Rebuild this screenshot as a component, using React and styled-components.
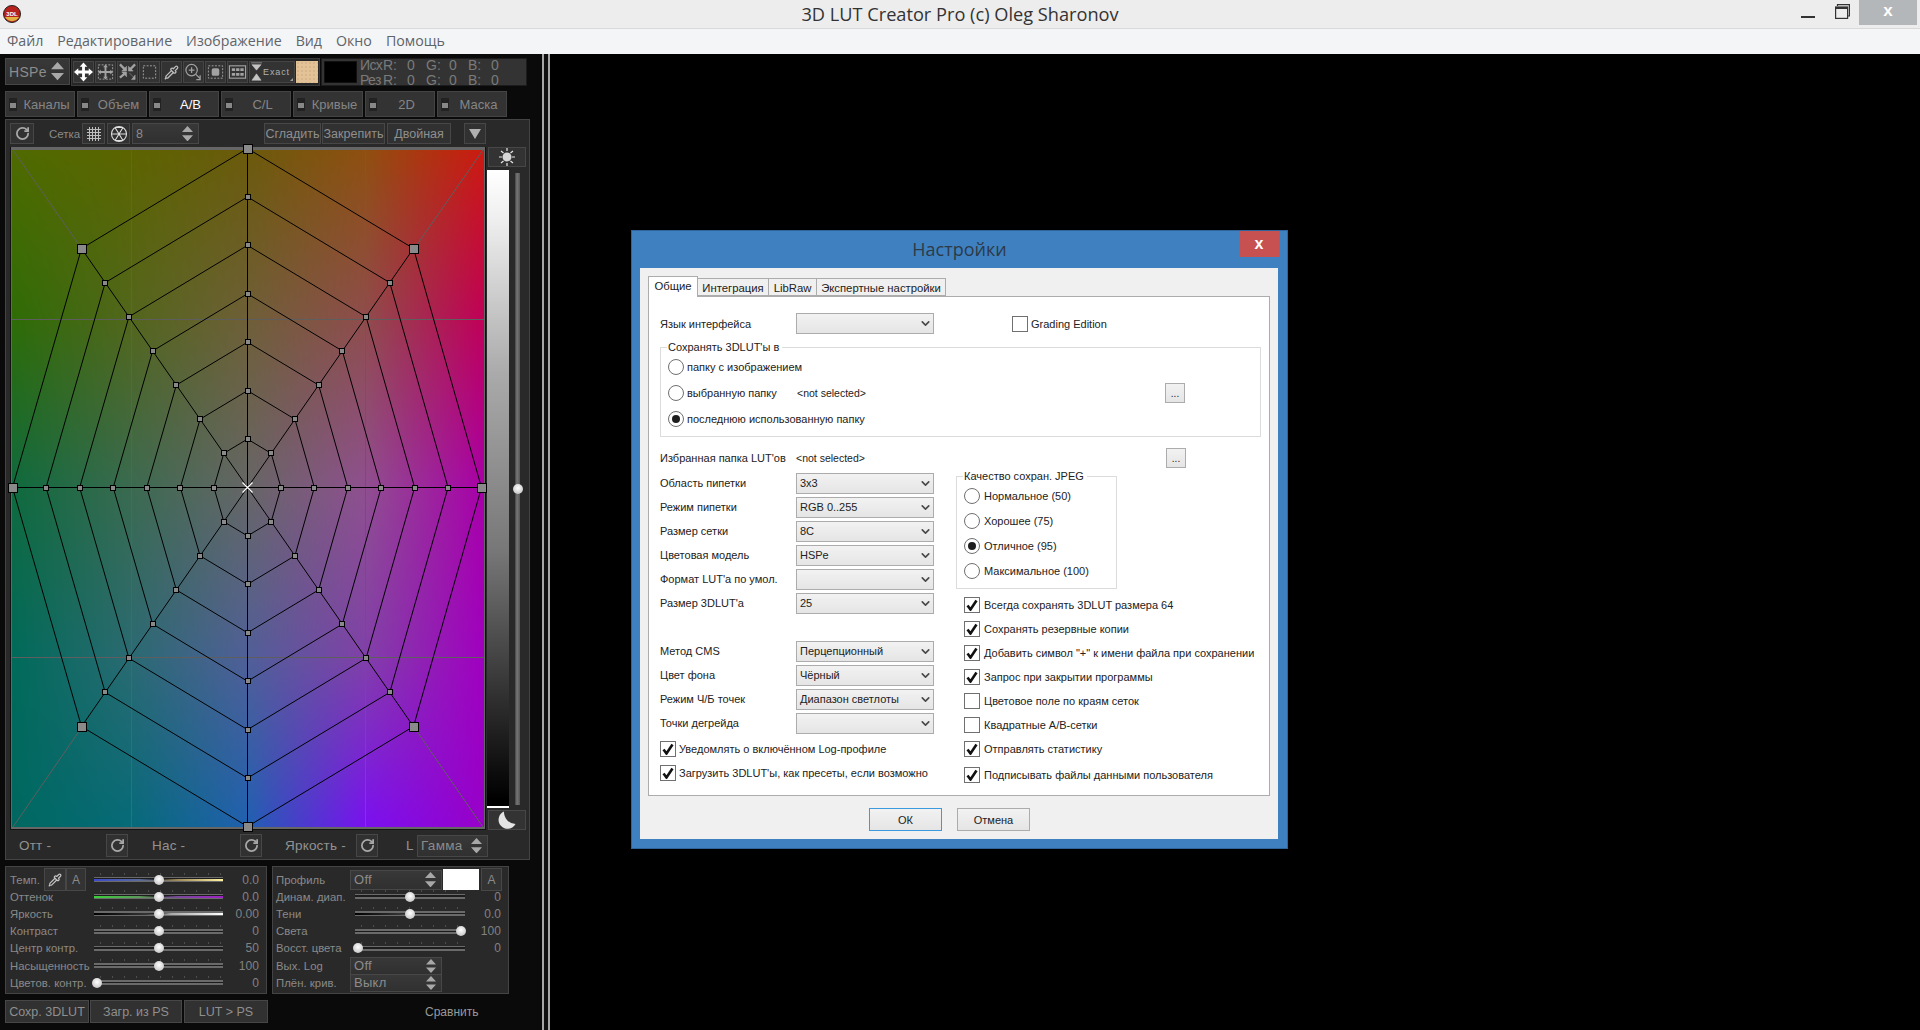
import React, { useEffect, useRef } from "react";
import styled, { createGlobalStyle } from "styled-components";
import { RotateCw, Pipette, ChevronDown } from "lucide-react";

const GlobalStyle = createGlobalStyle`
  html, body { margin: 0; padding: 0; background: #000; }
  * { box-sizing: border-box; }
  body { font-family: "Liberation Sans", Arial, sans-serif; }
`;

const MESH = [
  ["#4f6a00", "#5c6400", "#6b5a0c", "#8f4f10", "#cc1a10"],
  ["#2e6c06", "#52661c", "#6e5f38", "#8f4c4c", "#c00058"],
  ["#0f6a3e", "#3a6a50", "#666666", "#8f4f90", "#a800a8"],
  ["#006a5a", "#2a6a72", "#505f98", "#8040a8", "#a000c0"],
  ["#006860", "#066a78", "#2060b0", "#7a10f0", "#9800c8"],
];

const hex = s => [1, 3, 5].map(i => parseInt(s.slice(i, i + 2), 16));

const ColorPlane = () => {
  const ref = useRef(null);
  useEffect(() => {
    const c = ref.current;
    const ctx = c.getContext("2d");
    const img = ctx.createImageData(c.width, c.height);
    const cells = MESH.map(r => r.map(hex));
    let o = 0;
    for (let y = 0; y < c.height; y++) {
      const v = (y / (c.height - 1)) * 4;
      const j = Math.min(3, Math.floor(v));
      const fy = v - j;
      for (let x = 0; x < c.width; x++) {
        const u = (x / (c.width - 1)) * 4;
        const i = Math.min(3, Math.floor(u));
        const fx = u - i;
        for (let k = 0; k < 3; k++) {
          const top = cells[j][i][k] * (1 - fx) + cells[j][i + 1][k] * fx;
          const bot = cells[j + 1][i][k] * (1 - fx) + cells[j + 1][i + 1][k] * fx;
          img.data[o++] = top * (1 - fy) + bot * fy;
        }
        img.data[o++] = 255;
      }
    }
    ctx.putImageData(img, 0, 0);
  }, []);
  return <Plane ref={ref} width={472} height={677} />;
};

const CX = 248.5;
const CY = 488.5;
const OUTER = [
  [248.5, 149.5], [414.5, 249.5], [482.5, 488.5], [414.5, 727.5],
  [248.5, 827.5], [82.5, 727.5], [13.5, 488.5], [82.5, 249.5],
];

const Web = () => {
  const pt = (o, k) => [CX + ((o[0] - CX) * k) / 7, CY + ((o[1] - CY) * k) / 7];
  const rings = [1, 2, 3, 4, 5, 6, 7].map(k => OUTER.map(o => pt(o, k).join(",")).join(" "));
  return (
    <WebSvg viewBox="10 147 476 683" width="476" height="683">
      <g stroke="#5e5e5e" strokeWidth="1" fill="none">
        <path d="M132.5 151V828M366.5 151V828M13 320.500H485M13 658.500H485" />
        <path d="M14 151L83 250M484 151L415 250M14 828L83 728M484 828L415 728" />
      </g>
      <g stroke="#000" strokeWidth="1" fill="none">
        {rings.map((r, i) => <polygon key={i} points={r} />)}
        {OUTER.map((o, i) => <line key={i} x1={CX} y1={CY} x2={o[0]} y2={o[1]} />)}
      </g>
      {OUTER.map((o, i) =>
        [1, 2, 3, 4, 5, 6, 7].map(k => {
          const [x, y] = pt(o, k);
          const s = k === 7 ? 9 : 5;
          return (
            <rect key={i + "-" + k} x={Math.round(x) - s / 2} y={Math.round(y) - s / 2} width={s} height={s}
              fill="#8a8a8a" stroke="#000" strokeWidth="1" />
          );
        })
      )}
      <path d="M243.500 483.500L253.500 493.500M253.500 483.500L243.500 493.500" stroke="#fff" strokeWidth="1.200" />
    </WebSvg>
  );
};

const UpDown = ({ size = 13 }) => (
  <svg width={size} height={size * 1.4} viewBox="0 0 10 14">
    <path d="M5 0L10 5.500H0Z M5 14L0 8.500H10Z" fill="#a8a8a8" />
  </svg>
);

const iconGray = "#a2a2a2";
const ToolSvg = ({ children }) => <svg width="20" height="20" viewBox="0 0 20 20" fill="none">{children}</svg>;

const MoveIcon = () => (
  <ToolSvg>
    <path d="M10 0L14 4.500H11.500V8.500H15.500V6L20 10L15.500 14V11.500H11.500V15.500H14L10 20L6 15.500H8.500V11.500H4.500V14L0 10L4.500 6V8.500H8.500V4.500H6Z" fill="#fff" />
  </ToolSvg>
);
const ExpandIcon = () => (
  <ToolSvg>
    <rect x="2.500" y="2.500" width="15" height="15" stroke={iconGray} strokeDasharray="2 1.500" />
    <path d="M10 2L12.500 5H11V9H15V7.500L18 10L15 12.500V11H11V15H12.500L10 18L7.500 15H9V11H5V12.500L2 10L5 7.500V9H9V5H7.500Z" fill={iconGray} />
  </ToolSvg>
);
const CompressIcon = () => (
  <ToolSvg>
    <path d="M2 2L8 8M18 2L12 8M2 16L8 11" stroke={iconGray} strokeWidth="2.400" />
    <path d="M9 9V4L4 9ZM11 9V4L16 9ZM9 10V15L4 10ZM12 11L18 17M18 13V18H14" fill={iconGray} stroke={iconGray} strokeWidth=".6" />
  </ToolSvg>
);
const MarqueeIcon = () => (
  <ToolSvg><rect x="3.500" y="3.500" width="13" height="13" stroke={iconGray} strokeDasharray="2 1.500" /></ToolSvg>
);
const ZoomIcon = () => (
  <ToolSvg>
    <circle cx="8" cy="8" r="6" stroke={iconGray} strokeWidth="1.300" />
    <path d="M8 5V11M5 8H11M12.500 12.500L17 17M17 13.500V18H13" stroke={iconGray} strokeWidth="1.300" />
  </ToolSvg>
);
const FitIcon = () => (
  <ToolSvg>
    <rect x="2.500" y="3.500" width="15" height="13" stroke={iconGray} strokeDasharray="2 1.500" />
    <rect x="6" y="6" width="8" height="8" rx="2" fill={iconGray} />
  </ToolSvg>
);
const TilesIcon = () => (
  <ToolSvg>
    <rect x="1.500" y="3.500" width="17" height="13" stroke={iconGray} strokeWidth="1.200" />
    <path d="M4 6H7.500V9H4ZM8.500 6H12V9H8.500ZM13 6H16.500V9H13ZM4 11H7.500V14H4ZM8.500 11H12V14H8.500ZM13 11H16.500V14H13Z" fill={iconGray} />
  </ToolSvg>
);
const Hourglass = () => (
  <svg width="11" height="20" viewBox="0 0 12 20">
    <path d="M0 0H12M6 8L1 2H11ZM6 12L11 19H1Z" fill="#c4c4c4" stroke="#c4c4c4" strokeWidth=".6" />
  </svg>
);
const GridIcon = () => (
  <svg width="16" height="16" viewBox="0 0 16 16">
    <path d="M3.500 1V15M6.500 1V15M9.500 1V15M12.500 1V15M1 3.500H15M1 6.500H15M1 9.500H15M1 12.500H15" stroke="#bdbdbd" />
  </svg>
);
const PolarIcon = () => (
  <svg width="18" height="18" viewBox="0 0 18 18" fill="none" stroke="#e0e0e0" strokeWidth="1.100">
    <circle cx="9" cy="9" r="7.500" />
    <path d="M5 2.500L13 15.500M13 2.500L5 15.500M1.500 9H16.500M5 2.500H13M5 15.500H13" />
  </svg>
);
const SunIcon = () => (
  <svg width="20" height="18" viewBox="0 0 20 18">
    <circle cx="10" cy="9" r="4.500" fill="#d8d8d8" />
    <path d="M10 0V3M10 15V18M2 9H5M15 9H18M4 3L6.500 5M16 3L13.500 5M4 15L6.500 13M16 15L13.500 13" stroke="#e8e8e8" strokeWidth="1.200" />
  </svg>
);
const MoonIcon = () => (
  <svg width="18" height="18" viewBox="0 0 18 18">
    <path d="M6 0.500A9 9 0 1 0 17.500 13A12 12 0 0 1 6 0.500Z" fill="#e4e4e4" />
  </svg>
);
const Refresh = () => <RotateCw size={15} strokeWidth={2.800} color="#a8a8a8" />;

const Root = styled.div`
  position: relative;
  width: 1920px;
  height: 1030px;
  overflow: hidden;
  background: #000;
  display: flex;
  flex-direction: column;
`;

const TitleBar = styled.div`
  height: 29px;
  background: #ededed;
  border-bottom: 1px solid #d9d9d9;
  display: grid;
  grid-template-columns: 1fr auto 1fr;
  align-items: start;
`;

const AppIcon = styled.svg`
  margin: 5px 0 0 3px;
`;

const Title = styled.div`
  font-family: "Open Sans", sans-serif;
  font-size: 18.200px;
  line-height: 29px;
  color: #333;
`;

const WinControls = styled.div`
  justify-self: end;
  display: flex;
  align-items: flex-start;
  margin-right: 3px;
`;

const MinButton = styled.div`
  width: 14px;
  height: 2px;
  background: #333;
  margin: 16px 20px 0 0;
`;

const RestoreIcon = styled.svg`
  margin: 4px 9px 0 0;
`;

const CloseButton = styled.div`
  width: 58px;
  height: 25px;
  background: #b4b7b9;
  color: #fff;
  font-weight: bold;
  font-size: 17px;
  text-align: center;
  line-height: 22px;
`;

const MenuBar = styled.div`
  height: 25px;
  background: #f4f5f7;
  display: flex;
  align-items: center;
  gap: 14px;
  padding: 0 0 2px 7px;
  font-family: "Open Sans", sans-serif;
  font-size: 14.200px;
  color: #5f6469;
`;

const Workspace = styled.div`
  flex: 1;
  display: flex;
  min-height: 0;
`;

const LeftPane = styled.div`
  width: 542px;
  background: #0a0a0a;
  padding: 4px 0 0 5px;
  display: flex;
  flex-direction: column;
  font-family: "Liberation Sans", sans-serif;
  color: #8a8a8a;
`;

const Separator = styled.div`
  width: 8px;
  background: #111;
  border-left: 2px solid #a8a8a8;
  border-right: 2px solid #a8a8a8;
`;

const ToolRow = styled.div`
  display: flex;
  height: 28px;
  gap: 1px;
`;

const Combo = styled.div`
  width: ${p => p.$w}px;
  height: ${p => p.$h || 27}px;
  margin-left: ${p => p.$ml || 0}px;
  flex: none;
  background: linear-gradient(#383838, #303030);
  border: 1px solid #474747;
  display: flex;
  align-items: center;
  justify-content: space-between;
  padding: 0 5px 0 3px;
  font-size: ${p => p.$fs || 14}px;
  color: #8c8c8c;
  letter-spacing: .3px;
`;

const ToolGroup = styled.div`
  display: flex;
  width: 249px;
  gap: 1px;
  padding: 2px 1px;
  background: #262626;
  border: 1px solid #3a3a3a;
`;

const ToolButton = styled.div`
  position: relative;
  width: 21px;
  flex: none;
  background: #333;
  border: 1px solid #454545;
  display: flex;
  align-items: center;
  justify-content: center;
`;

const ExactButton = styled(ToolButton)`
  width: 46px;
  justify-content: flex-start;
  gap: 1px;
  padding-left: 1px;
  font-size: 9px;
  letter-spacing: .9px;
  color: #b0b0b0;
  overflow: hidden;
`;

const CornerMark = styled.span`
  position: absolute;
  right: 1px;
  bottom: 1px;
  width: 0;
  height: 0;
  border-left: 3px solid transparent;
  border-bottom: 3px solid #a0a0a0;
`;

const Swatch = styled.div`
  flex: 1;
  background: #e4c297;
  background-image: radial-gradient(#d8b68c 35%, transparent 40%);
  background-size: 4px 4px;
`;

const Readout = styled.div`
  width: 206px;
  background: #333;
  border: 1px solid #1c1c1c;
  display: flex;
  overflow: hidden;
`;

const BlackBox = styled.div`
  width: 33px;
  margin: 2px 3px 2px 2px;
  background: #000;
  border: 1px solid #111;
  flex: none;
`;

const ReadoutLines = styled.div`
  flex: 1;
  display: flex;
  flex-direction: column;
  justify-content: center;
  gap: 1px;
  font-size: 14px;
  line-height: 14px;
  color: #7a7a7a;
`;

const ReadoutLine = styled.div`
  display: grid;
  grid-template-columns: 23px 24px 19px 23px 19px 23px 20px;
  height: 14px;
`;

const ReadoutHead = styled.span`
  letter-spacing: -.6px;
  white-space: nowrap;
  overflow: hidden;
`;

const ModeRow = styled.div`
  display: flex;
  gap: 2px;
  margin-top: 5px;
`;

const ModeTab = styled.div`
  width: 70px;
  height: 26px;
  background: #333;
  border: 1px solid #444;
  display: flex;
  align-items: center;
  padding-left: 3px;
  font-size: 13px;
  color: ${p => (p.$active ? "#fff" : "#858585")};
`;

const ModeLed = styled.span`
  width: 8px;
  height: 13px;
  flex: none;
  background: linear-gradient(#222 35%, #888 35%, #888 85%, #222 85%);
  border: 1px solid #222;
`;

const ModeText = styled.span`
  flex: 1;
  text-align: center;
  padding-left: 2px;
`;

const MainPanel = styled.div`
  width: 525px;
  height: 741px;
  margin-top: 2px;
  background: #292929;
  border: 1px solid #444;
  padding: 3px 0 0 4px;
  display: flex;
  flex-direction: column;
`;

const GridBar = styled.div`
  height: 21px;
  display: flex;
  align-items: stretch;
  font-size: 12.500px;
`;

const DarkButton = styled.div`
  width: ${p => p.$w}px;
  margin-left: ${p => p.$ml || 0}px;
  height: ${p => p.$h || "auto"};
  flex: none;
  background: #313131;
  border: 1px solid #474747;
  display: flex;
  align-items: center;
  justify-content: center;
  color: #8f8f8f;
  white-space: nowrap;
`;

const SmallLabel = styled.span`
  margin-left: ${p => p.$ml}px;
  width: ${p => p.$w}px;
  flex: none;
  display: flex;
  align-items: center;
  font-size: 11.500px;
`;

const FieldRow = styled.div`
  display: flex;
  margin-top: 3px;
  height: 683px;
`;

const Field = styled.div`
  position: relative;
  width: 476px;
  height: 683px;
  flex: none;
  background: #666;
  border: 1px solid #111;
  border-width: 0 1px 1px;
  padding: 3px 1px 2px;
`;

const Plane = styled.canvas`
  display: block;
  width: 472px;
  height: 677px;
`;

const WebSvg = styled.svg`
  position: absolute;
  left: -2px;
  top: -1px;
  overflow: visible;
`;

const SideColumn = styled.div`
  width: 40px;
  margin-left: 2px;
  display: flex;
  flex-direction: column;
`;

const SideButton = styled.div`
  height: 20px;
  width: 38px;
  flex: none;
  background: #333;
  border: 1px solid #474747;
  display: flex;
  align-items: center;
  justify-content: center;
`;

const LevelRow = styled.div`
  flex: 1;
  display: flex;
  margin: 3px 0 2px -1px;
`;

const LevelBar = styled.div`
  width: 22px;
  background: linear-gradient(#fff, #eee 8%, #aaa 32%, #777 60%, #333 82%, #000 99%);
  border-bottom: 2px solid #fff;
`;

const LevelTrack = styled.div`
  position: relative;
  width: 5px;
  margin: 3px 0 3px 6px;
  background: linear-gradient(90deg, #444, #777 40%, #555);
`;

const RoundThumb = styled.div`
  position: absolute;
  left: ${p => p.$pos}%;
  top: ${p => p.$top || "50%"};
  width: 10px;
  height: 10px;
  margin: -5px 0 0 -5px;
  border-radius: 50%;
  background: radial-gradient(circle at 50% 40%, #fff, #ccc 70%, #aaa);
`;

const AxisRow = styled.div`
  height: 23px;
  margin-top: 4px;
  display: flex;
  align-items: center;
  font-size: 13.500px;
  color: #929292;
  letter-spacing: .2px;
`;

const AxisLabel = styled.span`
  width: ${p => p.$w}px;
  padding-left: ${p => p.$pl}px;
  flex: none;
`;

const PanelRow = styled.div`
  display: flex;
  gap: 5px;
  margin-top: 6px;
`;

const SubPanel = styled.div`
  width: ${p => p.$w}px;
  height: 128px;
  background: #292929;
  border: 1px solid #444;
  padding: ${p => p.$pad};
  font-size: 11.300px;
  letter-spacing: .05px;
`;

const SliderRow = styled.div`
  height: 17.200px;
  display: grid;
  grid-template-columns: ${p => p.$cols};
  grid-template-rows: 17.200px;
  align-items: center;
  white-space: nowrap;
`;

const RowLabel = styled.div`
  display: flex;
  align-items: center;
`;

const TempLabel = styled.span`
  width: 34px;
  flex: none;
`;

const MiniButton = styled.div`
  width: ${p => p.$w}px;
  height: 23px;
  flex: none;
  background: #333;
  border: 1px solid #474747;
  display: flex;
  align-items: center;
  justify-content: center;
  font-size: 12px;
`;

const Value = styled.div`
  text-align: right;
  font-size: 12px;
  color: #828282;
`;

const Slider = styled.div`
  position: relative;
  height: 5px;
  background: linear-gradient(#6a6a6a 0 1.500px, #1c1c1c 1.500px 3px, #6a6a6a 3px);
  &::before {
    content: "";
    position: absolute;
    left: 6px;
    right: 0;
    top: -4px;
    height: 2px;
    background: repeating-linear-gradient(90deg, #4e4e4e 0 1px, transparent 1px 12px);
  }
  &::after {
    content: "";
    position: absolute;
    left: 0;
    right: 0;
    top: 1.500px;
    height: 2px;
    background: ${p => (p.$colors ? `linear-gradient(90deg, ${p.$colors})` : "none")};
  }
`;

const SliderThumb = styled(RoundThumb)`
  z-index: 1;
`;

const WhiteBox = styled.div`
  width: 36px;
  height: 21px;
  flex: none;
  margin: 0 2px 0 1px;
  background: #fff;
`;

const FooterRow = styled.div`
  display: flex;
  gap: 1px;
  height: 23px;
  margin-top: 6px;
  font-size: 12.500px;
  align-items: stretch;
`;

const CompareText = styled.div`
  margin-left: 156px;
  display: flex;
  align-items: center;
  font-size: 12px;
  color: #999;
`;

const Dialog = styled.div`
  position: absolute;
  left: 631px;
  top: 230px;
  width: 657px;
  height: 619px;
  background: #3f81c0;
  border: 1px solid #2f659b;
  display: flex;
  flex-direction: column;
  font-family: "Liberation Sans", sans-serif;
  font-size: 11px;
  color: #222;
`;

const DialogHead = styled.div`
  height: 37px;
  display: grid;
  grid-template-columns: 1fr auto 1fr;
`;

const DialogTitle = styled.div`
  font-family: "Open Sans", sans-serif;
  font-size: 18px;
  line-height: 36px;
  color: #2c3a48;
`;

const DialogClose = styled.div`
  justify-self: end;
  width: 40px;
  height: 26px;
  margin-right: 8px;
  background: #c75050;
  color: #fff;
  font-weight: bold;
  font-size: 16px;
  line-height: 25px;
  text-align: center;
`;

const DialogBody = styled.div`
  flex: 1;
  margin: 0 9px 9px 8px;
  background: #f0f0f0;
  padding: 8px 0 0 8px;
`;

const Tabs = styled.div`
  display: flex;
  align-items: flex-end;
  height: 20px;
  font-size: 11.300px;
`;

const TabItem = styled.div`
  width: ${p => p.$w}px;
  height: ${p => (p.$active ? 21 : 18)}px;
  margin-bottom: ${p => (p.$active ? -1 : 0)}px;
  padding: ${p => (p.$active ? "0 0 3px" : "1px 0 0")};
  background: ${p => (p.$active ? "#fff" : "#f0f0f0")};
  border: 1px solid #acacac;
  border-bottom: ${p => (p.$active ? "none" : "1px solid #acacac")};
  border-left-width: ${p => (p.$first ? 1 : 0)}px;
  display: flex;
  align-items: center;
  justify-content: center;
  position: relative;
  z-index: ${p => (p.$active ? 1 : 0)};
`;

const Pane = styled.div`
  width: 622px;
  height: 500px;
  background: #fff;
  border: 1px solid #acacac;
  padding: 16px 0 0 11px;
`;

const Row = styled.div`
  height: ${p => p.$h || 24}px;
  display: flex;
  align-items: center;
  margin-top: ${p => p.$mt || 0}px;
`;

const FieldLabel = styled.div`
  width: 136px;
  flex: none;
  white-space: nowrap;
`;

const Note = styled.span`
  font-size: 10.500px;
`;

const Select = styled.div`
  width: 138px;
  height: 21px;
  flex: none;
  background: linear-gradient(#f2f2f2, #e5e5e5);
  border: 1px solid #acacac;
  display: flex;
  align-items: center;
  justify-content: space-between;
  padding: 0 1px 0 3px;
`;

const CheckLine = styled.label`
  display: flex;
  align-items: center;
  gap: ${p => p.$gap || 3}px;
  margin-left: ${p => p.$ml || 0}px;
  white-space: nowrap;
`;

const CheckBox = styled.span`
  width: 16px;
  height: 16px;
  flex: none;
  background: #fff;
  border: 1px solid #707070;
  display: flex;
  align-items: center;
  justify-content: center;
`;

const RadioDot = styled.span`
  width: 16px;
  height: 16px;
  flex: none;
  border-radius: 50%;
  background: #fff;
  border: 1px solid #6f6f6f;
  display: flex;
  align-items: center;
  justify-content: center;
  &::after {
    content: "";
    width: 8px;
    height: 8px;
    border-radius: 50%;
    background: ${p => (p.$on ? "#1e1e1e" : "transparent")};
  }
`;

const Group = styled.fieldset`
  width: ${p => p.$w}px;
  margin: ${p => p.$m || 0};
  border: 1px solid #dcdcdc;
  padding: ${p => p.$pad};
  min-inline-size: 0;
`;

const Legend = styled.legend`
  padding: 0 3px 0 1px;
  margin-left: ${p => p.$ml || 0}px;
  line-height: 13px;
`;

const RadioRow = styled.div`
  height: ${p => p.$h}px;
  display: flex;
  align-items: center;
`;

const RadioLabel = styled.div`
  width: ${p => p.$w || "auto"};
  flex: none;
`;

const Dots = styled.div`
  width: 20px;
  height: 20px;
  margin-left: auto;
  margin-right: ${p => p.$mr}px;
  flex: none;
  background: linear-gradient(#f2f2f2, #e5e5e5);
  border: 1px solid #acacac;
  text-align: center;
  line-height: 20px;
  font-size: 10px;
`;

const Columns = styled.div`
  display: flex;
`;

const ColLeft = styled.div`
  width: 274px;
  padding-top: 3px;
  flex: none;
`;

const ColRight = styled.div`
  margin-left: 22px;
  flex: none;
`;

const CheckColumn = styled.div`
  margin: 4px 0 0 8px;
`;

const DialogFooter = styled.div`
  display: flex;
  gap: 15px;
  padding: 12px 0 0 221px;
`;

const PlainButton = styled.div`
  width: 73px;
  height: 23px;
  background: linear-gradient(#f2f2f2, #e5e5e5);
  border: 1px solid ${p => (p.$primary ? "#3c9ade" : "#acacac")};
  display: flex;
  align-items: center;
  justify-content: center;
`;

const Tick = () => (
  <svg width="12" height="12" viewBox="0 0 12 12">
    <path d="M1.500 6.500L4.500 10.500L10.500 1.500" fill="none" stroke="#111" strokeWidth="2.600" />
  </svg>
);

const Drop = ({ label }) => (
  <Select>
    <span>{label}</span>
    <ChevronDown size={13} strokeWidth={3} color="#4a4a4a" />
  </Select>
);

const FormRow = ({ label, value }) => (
  <Row>
    <FieldLabel>{label}</FieldLabel>
    <Drop label={value} />
  </Row>
);

const Check = ({ label, on, gap }) => (
  <CheckLine $gap={gap}>
    <CheckBox>{on && <Tick />}</CheckBox>
    {label}
  </CheckLine>
);

const LEFT_SLIDERS = [
  ["Оттенок", 50, "0.0", "#39d039 0%, #5a9a5a 35%, transparent 50%, #7a4a9a 65%, #a020c8 100%"],
  ["Яркость", 50, "0.00", "#000 0%, #333 40%, transparent 50%, #aaa 60%, #fff 100%"],
  ["Контраст", 50, "0"],
  ["Центр контр.", 50, "50"],
  ["Насыщенность", 50, "100"],
  ["Цветов. контр.", 2, "0"],
];

const RIGHT_SLIDERS = [
  ["Динам. диап.", 50, "0"],
  ["Тени", 50, "0.0", "#000 0%, #333 40%, transparent 55%"],
  ["Света", 96, "100"],
  ["Восст. цвета", 3, "0"],
];

const JPEG = [
  ["Нормальное (50)"],
  ["Хорошее (75)"],
  ["Отличное (95)", true],
  ["Максимальное (100)"],
];

const EXTRA = [
  ["Всегда сохранять 3DLUT размера 64", true],
  ["Сохранять резервные копии", true],
  ['Добавить символ "+" к имени файла при сохранении', true],
  ["Запрос при закрытии программы", true],
  ["Цветовое поле по краям сеток", false],
  ["Квадратные A/B-сетки", false],
  ["Отправлять статистику", true],
];

const Track = ({ pos, colors }) => (
  <Slider $colors={colors}>
    <SliderThumb $pos={pos} $top="2.500px" />
  </Slider>
);

const LEFT_COLS = "84px 129px 36px";
const RIGHT_COLS = "79px 110px 36px";
const COMBO_COLS = "74px auto";

const MODES = ["Каналы", "Объем", "A/B", "C/L", "Кривые", "2D", "Маска"];

const App = () => (
  <Root>
    <GlobalStyle />
    <TitleBar>
      <AppIcon width="18" height="18" viewBox="0 0 18 18">
        <circle cx="9" cy="9" r="8.500" fill="#b8221c" stroke="#222" />
        <path d="M2 12A8 8 0 0 0 16 12Z" fill="#e0b040" />
        <text x="9" y="11" fontSize="6" fontWeight="bold" textAnchor="middle" fill="#fff" fontFamily="Liberation Sans">3DL</text>
      </AppIcon>
      <Title>3D LUT Creator Pro (c) Oleg Sharonov</Title>
      <WinControls>
        <MinButton />
        <RestoreIcon width="15" height="15" viewBox="0 0 15 15" fill="none" stroke="#333" strokeWidth="1.200">
          <path d="M2.500 2V.6H14.400V12H13" />
          <rect x=".6" y="3" width="12" height="11.400" />
          <path d="M.6 4H12.600" strokeWidth="2" />
        </RestoreIcon>
        <CloseButton>x</CloseButton>
      </WinControls>
    </TitleBar>
    <MenuBar>
      <span>Файл</span>
      <span>Редактирование</span>
      <span>Изображение</span>
      <span>Вид</span>
      <span>Окно</span>
      <span>Помощь</span>
    </MenuBar>
    <Workspace>
      <LeftPane>
        <ToolRow>
          <Combo $w={65}>HSPe <UpDown /></Combo>
          <ToolGroup>
            <ToolButton><MoveIcon /></ToolButton>
            <ToolButton><ExpandIcon /></ToolButton>
            <ToolButton><CompressIcon /></ToolButton>
            <ToolButton><MarqueeIcon /></ToolButton>
            <ToolButton><Pipette size={15} color="#c0c0c0" /></ToolButton>
            <ToolButton><ZoomIcon /></ToolButton>
            <ToolButton><FitIcon /></ToolButton>
            <ToolButton><TilesIcon /></ToolButton>
            <ExactButton><Hourglass />Exact<CornerMark /></ExactButton>
            <Swatch />
          </ToolGroup>
          <Readout>
            <BlackBox />
            <ReadoutLines>
              <ReadoutLine>
                <ReadoutHead>Исх</ReadoutHead><span>R:</span><span>0</span><span>G:</span><span>0</span><span>B:</span><span>0</span>
              </ReadoutLine>
              <ReadoutLine>
                <ReadoutHead>Рез</ReadoutHead><span>R:</span><span>0</span><span>G:</span><span>0</span><span>B:</span><span>0</span>
              </ReadoutLine>
            </ReadoutLines>
          </Readout>
        </ToolRow>
        <ModeRow>
          {MODES.map(m => (
            <ModeTab key={m} $active={m === "A/B"}>
              <ModeLed />
              <ModeText>{m}</ModeText>
            </ModeTab>
          ))}
        </ModeRow>
        <MainPanel>
          <GridBar>
            <DarkButton $w={24}><Refresh /></DarkButton>
            <SmallLabel $ml={15} $w={33}>Сетка</SmallLabel>
            <DarkButton $w={23}><GridIcon /></DarkButton>
            <DarkButton $w={23} $ml={2}><PolarIcon /></DarkButton>
            <Combo $w={67} $h={21} $fs={12.500} $ml={2}>8 <UpDown size={11} /></Combo>
            <DarkButton $w={57} $ml={65}>Сгладить</DarkButton>
            <DarkButton $w={63} $ml={1}>Закрепить</DarkButton>
            <DarkButton $w={64} $ml={2}>Двойная</DarkButton>
            <DarkButton $w={22} $ml={13}>
              <svg width="12" height="10" viewBox="0 0 12 10"><path d="M0 0H12L6 10Z" fill="#b0b0b0" /></svg>
            </DarkButton>
          </GridBar>
          <FieldRow>
            <Field>
              <ColorPlane />
              <Web />
            </Field>
            <SideColumn>
              <SideButton><SunIcon /></SideButton>
              <LevelRow>
                <LevelBar />
                <LevelTrack><RoundThumb $pos={50} /></LevelTrack>
              </LevelRow>
              <SideButton><MoonIcon /></SideButton>
            </SideColumn>
          </FieldRow>
          <AxisRow>
            <AxisLabel $w={96} $pl={9}>Отт -</AxisLabel>
            <DarkButton $w={22} $h="23px"><Refresh /></DarkButton>
            <AxisLabel $w={112} $pl={24}>Нас -</AxisLabel>
            <DarkButton $w={22} $h="23px"><Refresh /></DarkButton>
            <AxisLabel $w={94} $pl={23}>Яркость -</AxisLabel>
            <DarkButton $w={22} $h="23px"><Refresh /></DarkButton>
            <AxisLabel $w={39} $pl={28}>L</AxisLabel>
            <Combo $w={71} $h={22} $fs={13.500}>Гамма <UpDown size={11} /></Combo>
          </AxisRow>
        </MainPanel>
        <PanelRow>
          <SubPanel $w={262} $pad="4px 4px">
            <SliderRow $cols={LEFT_COLS}>
              <RowLabel>
                <TempLabel>Темп.</TempLabel>
                <MiniButton $w={22}><Pipette size={14} color="#c4c4c4" /></MiniButton>
                <MiniButton $w={20}>A</MiniButton>
              </RowLabel>
              <Track pos={50} colors="#3a4ad0 0%, #5a6a9a 35%, transparent 50%, #a08a5a 65%, #fff4a0 100%" />
              <Value>0.0</Value>
            </SliderRow>
            {LEFT_SLIDERS.map(([label, pos, value, colors]) => (
              <SliderRow key={label} $cols={LEFT_COLS}>
                <div>{label}</div>
                <Track pos={pos} colors={colors} />
                <Value>{value}</Value>
              </SliderRow>
            ))}
          </SubPanel>
          <SubPanel $w={237} $pad="4px 3px">
            <SliderRow $cols={COMBO_COLS}>
              <div>Профиль</div>
              <RowLabel>
                <Combo $w={92} $h={20} $fs={13}>Off <UpDown size={11} /></Combo>
                <WhiteBox />
                <MiniButton $w={21}>A</MiniButton>
              </RowLabel>
            </SliderRow>
            {RIGHT_SLIDERS.map(([label, pos, value, colors]) => (
              <SliderRow key={label} $cols={RIGHT_COLS}>
                <div>{label}</div>
                <Track pos={pos} colors={colors} />
                <Value>{value}</Value>
              </SliderRow>
            ))}
            <SliderRow $cols={COMBO_COLS}>
              <div>Вых. Log</div>
              <Combo $w={92} $h={18} $fs={13}>Off <UpDown size={10} /></Combo>
            </SliderRow>
            <SliderRow $cols={COMBO_COLS}>
              <div>Плён. крив.</div>
              <Combo $w={92} $h={18} $fs={13}>Выкл <UpDown size={10} /></Combo>
            </SliderRow>
          </SubPanel>
        </PanelRow>
        <FooterRow>
          <DarkButton $w={84}>Сохр. 3DLUT</DarkButton>
          <DarkButton $w={92}>Загр. из PS</DarkButton>
          <DarkButton $w={84} $ml={1}>LUT &gt; PS</DarkButton>
          <CompareText>Сравнить</CompareText>
        </FooterRow>
      </LeftPane>
      <Separator />
    </Workspace>

    <Dialog>
      <DialogHead>
        <span />
        <DialogTitle>Настройки</DialogTitle>
        <DialogClose>x</DialogClose>
      </DialogHead>
      <DialogBody>
        <Tabs>
          <TabItem $w={50} $active $first>Общие</TabItem>
          <TabItem $w={71}>Интеграция</TabItem>
          <TabItem $w={48}>LibRaw</TabItem>
          <TabItem $w={129}>Экспертные настройки</TabItem>
        </Tabs>
        <Pane>
          <Row $h={21}>
            <FieldLabel>Язык интерфейса</FieldLabel>
            <Drop label="" />
            <CheckLine $ml={78}>
              <CheckBox />
              Grading Edition
            </CheckLine>
          </Row>
          <Group $w={601} $m="7px 0 0" $pad="0 0 4px 7px">
            <Legend $ml={-1}>Сохранять 3DLUT'ы в</Legend>
            <RadioRow $h={26}>
              <CheckLine><RadioDot />папку с изображением</CheckLine>
            </RadioRow>
            <RadioRow $h={26}>
              <CheckLine><RadioDot /><RadioLabel $w="110px">выбранную папку</RadioLabel></CheckLine>
              <Note>&lt;not selected&gt;</Note>
              <Dots $mr={75}>...</Dots>
            </RadioRow>
            <RadioRow $h={26}>
              <CheckLine><RadioDot $on />последнюю использованную папку</CheckLine>
            </RadioRow>
          </Group>
          <Row $h={20} $mt={11}>
            <FieldLabel>Избранная папка LUT'ов</FieldLabel>
            <Note>&lt;not selected&gt;</Note>
            <Dots $mr={83}>...</Dots>
          </Row>
          <Columns>
            <ColLeft>
              <FormRow label="Область пипетки" value="3x3" />
              <FormRow label="Режим пипетки" value="RGB 0..255" />
              <FormRow label="Размер сетки" value="8C" />
              <FormRow label="Цветовая модель" value="HSPe" />
              <FormRow label="Формат LUT'а по умол." value="" />
              <FormRow label="Размер 3DLUT'а" value="25" />
              <Row />
              <FormRow label="Метод CMS" value="Перцепционный" />
              <FormRow label="Цвет фона" value="Чёрный" />
              <FormRow label="Режим Ч/Б точек" value="Диапазон светлоты" />
              <FormRow label="Точки дегрейда" value="" />
              <Row $mt={1.500}><Check on label="Уведомлять о включённом Log-профиле" /></Row>
              <Row><Check on label="Загрузить 3DLUT'ы, как пресеты, если возможно" /></Row>
            </ColLeft>
            <ColRight>
              <Group $w={161} $m="2px 0 0" $pad="0 0 5px 7px">
                <Legend $ml={-1}>Качество сохран. JPEG</Legend>
                {JPEG.map(([label, on]) => (
                  <RadioRow key={label} $h={25}>
                    <CheckLine $gap={4}><RadioDot $on={on} />{label}</CheckLine>
                  </RadioRow>
                ))}
              </Group>
              <CheckColumn>
                {EXTRA.map(([label, on]) => (
                  <Row key={label}><Check on={on} gap={4} label={label} /></Row>
                ))}
                <Row $mt={2}><Check on gap={4} label="Подписывать файлы данными пользователя" /></Row>
              </CheckColumn>
            </ColRight>
          </Columns>
        </Pane>
        <DialogFooter>
          <PlainButton $primary>ОК</PlainButton>
          <PlainButton>Отмена</PlainButton>
        </DialogFooter>
      </DialogBody>
    </Dialog>
  </Root>
);

export default App;
